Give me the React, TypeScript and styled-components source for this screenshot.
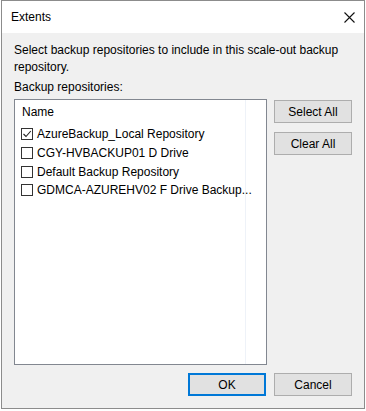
import React from "react";
import styled, { createGlobalStyle } from "styled-components";

const Global = createGlobalStyle`
  html, body { margin: 0; padding: 0; background: #ffffff; }
  body { font-family: "Liberation Sans", Arial, sans-serif; }
  * { box-sizing: border-box; }
`;

const Frame = styled.div`
  margin-left: 1px;
  width: 364px;
  height: 409px;
  border: 1px solid #8c8c8c;
  background: #f0f0f0;
  display: flex;
  flex-direction: column;
  color: #000;
  font-size: 12px;
`;

const TitleBar = styled.div`
  height: 32px;
  flex: none;
  background: #ffffff;
  display: flex;
  align-items: center;
  justify-content: space-between;
  padding-left: 9px;
  padding-right: 9px;
`;

const Title = styled.span`
  font-size: 12px;
`;

const CloseBox = styled.div`
  width: 11px;
  height: 11px;
  display: flex;
`;

const Body = styled.div`
  flex: 1;
  display: flex;
  flex-direction: column;
  padding: 9px 12px 12px 12px;
`;

const Text = styled.div`
  line-height: 17px;
  white-space: nowrap;
`;

const Label = styled.div`
  line-height: 17px;
  margin-top: 3px;
`;

const Main = styled.div`
  display: flex;
  gap: 7px;
  margin-top: 3px;
  height: 266px;
  flex: none;
`;

const ListBox = styled.div`
  width: 253px;
  height: 100%;
  border: 1px solid #828790;
  background: #fff;
  display: flex;
`;

const Column = styled.div`
  width: 231px;
  border-right: 1px solid #eef2f8;
  display: flex;
  flex-direction: column;
`;

const Header = styled.div`
  height: 25px;
  display: flex;
  align-items: center;
  padding-left: 7px;
  padding-bottom: 1px;
`;

const Row = styled.div`
  height: 18.7px;
  display: flex;
  align-items: center;
  padding-left: 6px;
  gap: 4px;
  white-space: nowrap;
`;

const Box = styled.div`
  width: 12px;
  height: 12px;
  border: 1px solid #333;
  background: #fff;
  flex: none;
  display: flex;
  align-items: center;
  justify-content: center;
`;

const Side = styled.div`
  display: flex;
  flex-direction: column;
  gap: 9px;
  padding-top: 1px;
`;

const Button = styled.button<{ $default?: boolean }>`
  width: 78px;
  height: 23px;
  font-family: inherit;
  font-size: 12px;
  color: #000;
  background: #e1e1e1;
  border: ${(p) => (p.$default ? "2px solid #0078d7" : "1px solid #adadad")};
  padding: 0;
  margin: 0;
  line-height: 1;
`;

const Footer = styled.div`
  display: flex;
  justify-content: flex-end;
  gap: 8px;
  margin-top: 8px;
`;

const items = [
  { name: "AzureBackup_Local Repository", checked: true },
  { name: "CGY-HVBACKUP01 D Drive", checked: false },
  { name: "Default Backup Repository", checked: false },
  { name: "GDMCA-AZUREHV02 F Drive Backup...", checked: false },
];

export default function App() {
  return (
    <>
      <Global />
      <Frame>
        <TitleBar>
          <Title>Extents</Title>
          <CloseBox>
            <svg width="11" height="11" viewBox="0 0 11 11">
              <path d="M0.5 0.5 L10.5 10.5 M10.5 0.5 L0.5 10.5" stroke="#111" strokeWidth="1.1" fill="none" />
            </svg>
          </CloseBox>
        </TitleBar>
        <Body>
          <Text>
            Select backup repositories to include in this scale-out backup
            <br />
            repository.
          </Text>
          <Label>Backup repositories:</Label>
          <Main>
            <ListBox>
              <Column>
                <Header>Name</Header>
                {items.map((it) => (
                  <Row key={it.name}>
                    <Box>
                      {it.checked && (
                        <svg width="10" height="10" viewBox="0 0 10 10">
                          <path d="M1.5 5 L4 7.5 L8.8 2" stroke="#222" strokeWidth="1.1" fill="none" />
                        </svg>
                      )}
                    </Box>
                    <span>{it.name}</span>
                  </Row>
                ))}
              </Column>
            </ListBox>
            <Side>
              <Button>Select All</Button>
              <Button>Clear All</Button>
            </Side>
          </Main>
          <Footer>
            <Button $default>OK</Button>
            <Button>Cancel</Button>
          </Footer>
        </Body>
      </Frame>
    </>
  );
}
